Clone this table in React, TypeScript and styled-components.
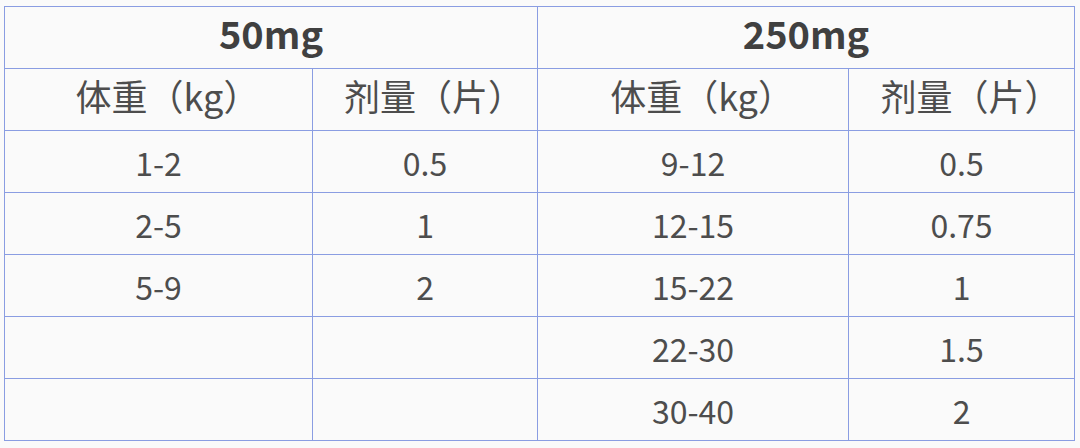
import React from 'react'
import styled, { createGlobalStyle } from 'styled-components'

const GlobalStyle = createGlobalStyle`
    html, body {
        margin: 0;
        padding: 0;
        background: #fafafa;
    }
    body {
        font-family: "Noto Sans CJK SC", "Noto Sans", sans-serif;
        color: #4d4d4d;
    }
`

type Dose = { weight: string; amount: string }

const small: Dose[] = [
    { weight: '1-2', amount: '0.5' },
    { weight: '2-5', amount: '1' },
    { weight: '5-9', amount: '2' },
]

const large: Dose[] = [
    { weight: '9-12', amount: '0.5' },
    { weight: '12-15', amount: '0.75' },
    { weight: '15-22', amount: '1' },
    { weight: '22-30', amount: '1.5' },
    { weight: '30-40', amount: '2' },
]

export default function App() {
    const rows = Math.max(small.length, large.length)

    return (
        <Page>
            <GlobalStyle />
            <DoseTable>
                <colgroup>
                    <col style={{ width: 308 }} />
                    <col style={{ width: 225 }} />
                    <col style={{ width: 311 }} />
                    <col style={{ width: 226 }} />
                </colgroup>
                <thead>
                    <tr>
                        <Heading colSpan={2}>50mg</Heading>
                        <Heading colSpan={2}>250mg</Heading>
                    </tr>
                    <tr>
                        <SubHeading>体重（kg）</SubHeading>
                        <SubHeading>剂量（片）</SubHeading>
                        <SubHeading>体重（kg）</SubHeading>
                        <SubHeading>剂量（片）</SubHeading>
                    </tr>
                </thead>
                <tbody>
                    {Array.from({ length: rows }).map((_, i) => (
                        <tr key={i}>
                            <Cell>{small[i]?.weight}</Cell>
                            <Cell>{small[i]?.amount}</Cell>
                            <Cell>{large[i]?.weight}</Cell>
                            <Cell>{large[i]?.amount}</Cell>
                        </tr>
                    ))}
                </tbody>
            </DoseTable>
        </Page>
    )
}

const Page = styled.div`
    padding: 6px 0 0 4px;
`

const DoseTable = styled.table`
    border-collapse: collapse;
    table-layout: fixed;
    width: 1070px;
    background: #fafafa;
`

const Base = styled.td`
    border: 1.5px solid #8a9de2;
    height: 62px;
    padding: 0;
    text-align: center;
    vertical-align: middle;
    box-sizing: border-box;
    line-height: 1;
`

const Heading = styled(Base).attrs({ as: 'th' })`
    font-size: 38px;
    font-weight: 700;
    color: #404040;
    padding-bottom: 9px;
`

const SubHeading = styled(Base).attrs({ as: 'th' })`
    font-size: 36px;
    font-weight: 400;
    color: #4d4d4d;
    padding: 0 0 10px 18px;
    white-space: nowrap;
`

const Cell = styled(Base)`
    font-size: 32px;
    color: #4d4d4d;
`
